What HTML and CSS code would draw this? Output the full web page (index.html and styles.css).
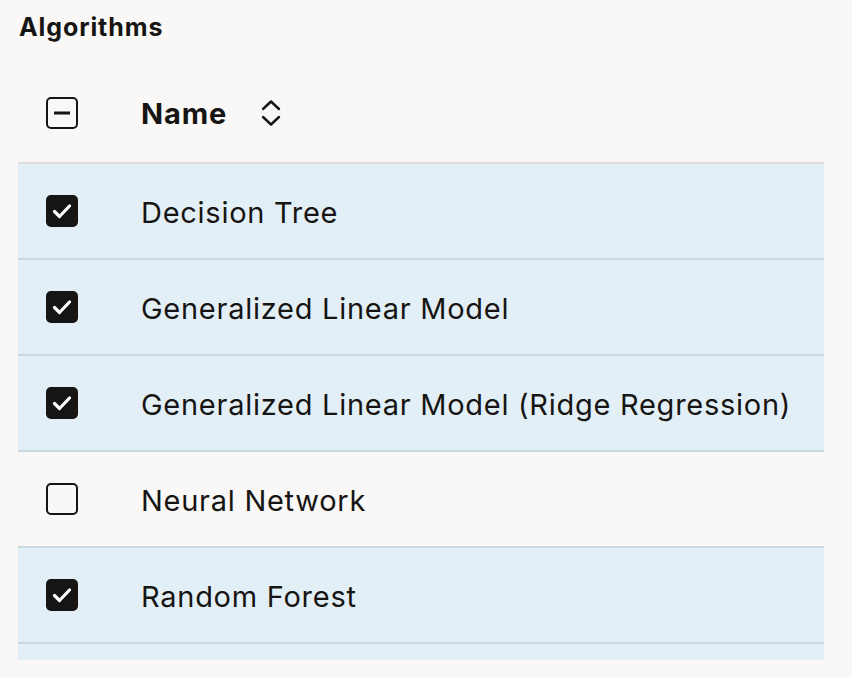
FILE: index.html
```html
<!DOCTYPE html>
<html lang="en">
<head>
<meta charset="utf-8">
<title>Algorithms</title>
<link rel="stylesheet" href="styles.css">
</head>
<body>
<div class="panel">
  <h1 class="title">Algorithms</h1>
  <div class="table">
    <div class="row head">
      <div class="cell-check">
        <span class="box">
          <svg viewBox="0 0 32 32" width="32" height="32"><rect x="8" y="14.5" width="16" height="3" fill="#161513"/></svg>
        </span>
      </div>
      <div class="cell-name">
        <span class="head-label">Name</span>
        <svg class="sort" viewBox="0 0 22 28" width="22" height="28"><path d="M3 10 L11 2.5 L19 10 M3 18 L11 25.5 L19 18" fill="none" stroke="#161513" stroke-width="2.4" stroke-linecap="round" stroke-linejoin="round"/></svg>
      </div>
    </div>
    <div class="row sel">
      <div class="cell-check"><span class="box on"><svg viewBox="0 0 32 32" width="32" height="32"><path d="M8.5 16.5 L13.5 21.5 L23.5 11" fill="none" stroke="#fff" stroke-width="3.2" stroke-linecap="round" stroke-linejoin="round"/></svg></span></div>
      <div class="cell-name">Decision Tree</div>
    </div>
    <div class="row sel">
      <div class="cell-check"><span class="box on"><svg viewBox="0 0 32 32" width="32" height="32"><path d="M8.5 16.5 L13.5 21.5 L23.5 11" fill="none" stroke="#fff" stroke-width="3.2" stroke-linecap="round" stroke-linejoin="round"/></svg></span></div>
      <div class="cell-name">Generalized Linear Model</div>
    </div>
    <div class="row sel">
      <div class="cell-check"><span class="box on"><svg viewBox="0 0 32 32" width="32" height="32"><path d="M8.5 16.5 L13.5 21.5 L23.5 11" fill="none" stroke="#fff" stroke-width="3.2" stroke-linecap="round" stroke-linejoin="round"/></svg></span></div>
      <div class="cell-name">Generalized Linear Model (Ridge Regression)</div>
    </div>
    <div class="row">
      <div class="cell-check"><span class="box"></span></div>
      <div class="cell-name">Neural Network</div>
    </div>
    <div class="row sel">
      <div class="cell-check"><span class="box on"><svg viewBox="0 0 32 32" width="32" height="32"><path d="M8.5 16.5 L13.5 21.5 L23.5 11" fill="none" stroke="#fff" stroke-width="3.2" stroke-linecap="round" stroke-linejoin="round"/></svg></span></div>
      <div class="cell-name">Random Forest</div>
    </div>
    <div class="row sel"></div>
  </div>
</div>
</body>
</html>
```
FILE: styles.css
```css
html, body {
  margin: 0;
  padding: 0;
  background: #f9f8f6;
}
body {
  font-family: Inter, "Noto Sans", "Liberation Sans", sans-serif;
  color: #161513;
}
.panel {
  width: 806px;
  padding-left: 18px;
}
.title {
  margin: 0;
  height: 64px;
  box-sizing: border-box;
  padding: 12px 0 0 1px;
  font-size: 25px;
  line-height: 30px;
  font-weight: 700;
  letter-spacing: 0.9px;
}
.table {
  height: 596px;
  overflow: hidden;
}
.row {
  display: flex;
  align-items: center;
  height: 94px;
  border-bottom: 2px solid #c9d9e1;
  font-size: 29px;
  letter-spacing: 0.73px;
}
.row.head {
  height: 98px;
  border-bottom-color: #dfdddb;
}
.row.sel {
  background: #e3eff6;
}
.cell-check {
  width: 123px;
  padding-left: 28px;
  box-sizing: border-box;
  display: flex;
  align-items: center;
}
.cell-name {
  display: flex;
  align-items: center;
  padding-top: 3px;
}
.box {
  width: 32px;
  height: 32px;
  box-sizing: border-box;
  border: 2.5px solid #161513;
  border-radius: 5px;
  position: relative;
}
.box svg {
  position: absolute;
  left: -2.5px;
  top: -2.5px;
}
.box.on {
  background: #161513;
}
.head .cell-name {
  padding-top: 0;
}
.head-label {
  font-weight: 700;
  letter-spacing: 0.9px;
}
.sort {
  margin-left: 33px;
}
```
